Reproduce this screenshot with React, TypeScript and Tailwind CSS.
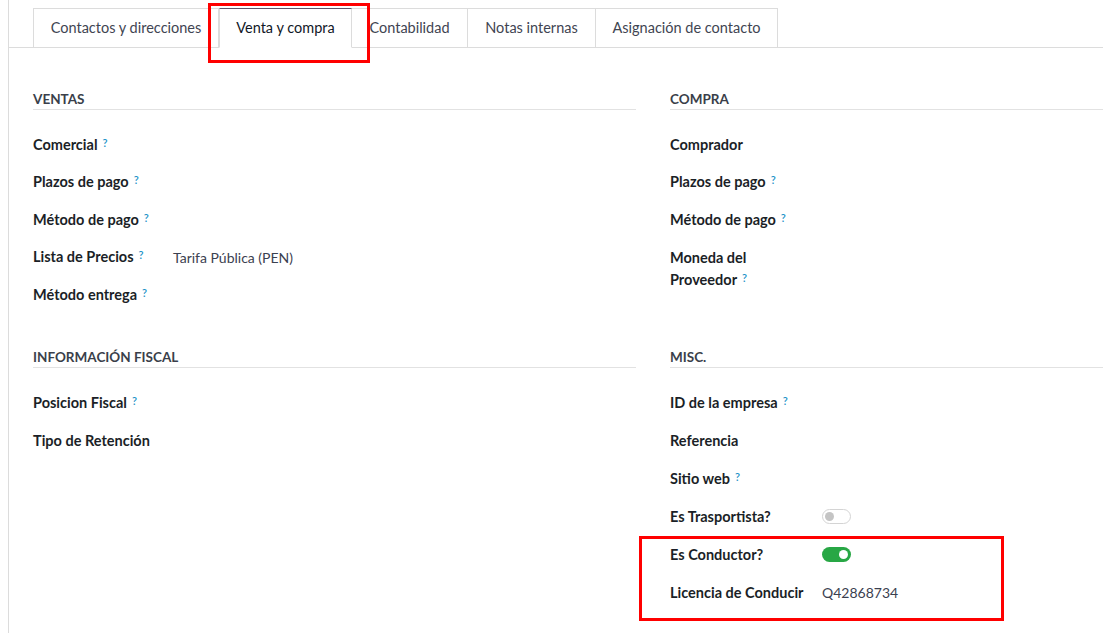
import React from 'react'

type Field = {
  label: string
  help?: boolean
  value?: string
  toggle?: 'on' | 'off'
  twoLine?: [string, string]
}

const tabs = [
  { name: 'Contactos y direcciones', w: 'w-[186px]' },
  { name: 'Venta y compra', w: 'w-[133px]', active: true },
  { name: 'Contabilidad', w: 'w-[116px]' },
  { name: 'Notas internas', w: 'w-[128px]' },
  { name: 'Asignación de contacto', w: 'w-[182px]' },
]

const ventas: Field[] = [
  { label: 'Comercial', help: true },
  { label: 'Plazos de pago', help: true },
  { label: 'Método de pago', help: true },
  { label: 'Lista de Precios', help: true, value: 'Tarifa Pública (PEN)' },
  { label: 'Método entrega', help: true },
]

const compra: Field[] = [
  { label: 'Comprador' },
  { label: 'Plazos de pago', help: true },
  { label: 'Método de pago', help: true },
  { label: '', help: true, twoLine: ['Moneda del', 'Proveedor'] },
]

const fiscal: Field[] = [
  { label: 'Posicion Fiscal', help: true },
  { label: 'Tipo de Retención' },
]

const misc: Field[] = [
  { label: 'ID de la empresa', help: true },
  { label: 'Referencia' },
  { label: 'Sitio web', help: true },
  { label: 'Es Trasportista?', toggle: 'off' },
  { label: 'Es Conductor?', toggle: 'on' },
  { label: 'Licencia de Conducir', value: 'Q42868734' },
]

function Help() {
  return (
    <sup className="ml-[5px] text-[11px] font-semibold text-[#1d93c8] relative -top-[3px]">?</sup>
  )
}

function Toggle({ on }: { on: boolean }) {
  return on ? (
    <span className="flex items-center justify-end w-[29px] h-[15px] rounded-full bg-[#28a745] px-[3px]">
      <span className="w-[9px] h-[9px] rounded-full bg-white" />
    </span>
  ) : (
    <span className="flex items-center justify-start w-[29px] h-[15px] rounded-full bg-white border border-[#d4d4d4] px-[2px]">
      <span className="w-[9px] h-[9px] rounded-full bg-[#c4c4c4]" />
    </span>
  )
}

function Section({
  title,
  fields,
  labelW,
  rowH,
}: {
  title: string
  fields: Field[]
  labelW: string
  rowH: string
}) {
  return (
    <div className="w-[603px]">
      <div className="h-[20px] leading-[19px] border-b border-[#e2e2e2] text-[13.5px] font-bold uppercase text-[#3a3f4a]">
        {title}
      </div>
      <div className="mt-[16px]">
        {fields.map((f, i) => (
          <div key={i} className={f.twoLine ? 'flex py-[8px]' : `flex items-center ${rowH}`}>
            <div className={`${labelW} shrink-0 text-[14.5px] font-bold text-[#1b1f27] leading-[22px]`}>
              {f.twoLine ? (
                <>
                  <div>{f.twoLine[0]}</div>
                  <div>
                    {f.twoLine[1]}
                    <Help />
                  </div>
                </>
              ) : (
                <>
                  {f.label}
                  {f.help && <Help />}
                </>
              )}
            </div>
            {f.value && <div className="text-[14px] text-[#3b4150]">{f.value}</div>}
            {f.toggle && <Toggle on={f.toggle === 'on'} />}
          </div>
        ))}
      </div>
    </div>
  )
}

export default function App() {
  return (
    <div className="relative w-[1103px] h-[633px] overflow-hidden bg-white" style={{ fontFamily: 'Lato, "Open Sans", sans-serif' }}>
      <div className="ml-[8px] h-full border-l border-[#dcdcdc] w-[1400px]">
        {/* Tabs */}
        <div className="flex pl-[24px] pt-[8px] border-b border-[#dcdcdc]">
          {tabs.map((t) =>
            t.active ? (
              <div
                key={t.name}
                className={`${t.w} h-[40px] -mb-px flex items-center justify-center bg-white border border-[#dcdcdc] border-t-[#5d566b] border-b-white text-[14.5px] text-[#111827]`}
              >
                {t.name}
              </div>
            ) : (
              <div
                key={t.name}
                className={`${t.w} h-[39px] flex items-center justify-center border-t border-r border-[#dcdcdc] first:border-l text-[14.5px] text-[#3f4552]`}
              >
                {t.name}
              </div>
            )
          )}
        </div>

        {/* Content */}
        <div className="pl-[24px] pt-[42px]">
          <div className="flex gap-[34px]">
            <Section title="Ventas" fields={ventas} labelW="w-[140px]" rowH="h-[37.5px]" />
            <Section title="Compra" fields={compra} labelW="w-[152px]" rowH="h-[37.5px]" />
          </div>
          <div className="flex gap-[34px] mt-[34px]">
            <Section title="Información Fiscal" fields={fiscal} labelW="w-[140px]" rowH="h-[38px]" />
            <Section title="Misc." fields={misc} labelW="w-[152px]" rowH="h-[38px]" />
          </div>
        </div>
      </div>

      {/* annotation boxes */}
      <div className="absolute left-[208px] top-[3px] w-[162px] h-[60px] border-[3px] border-[#ff0000]" />
      <div className="absolute left-[639px] top-[536px] w-[365px] h-[85px] border-[3px] border-[#ff0000]" />
    </div>
  )
}
